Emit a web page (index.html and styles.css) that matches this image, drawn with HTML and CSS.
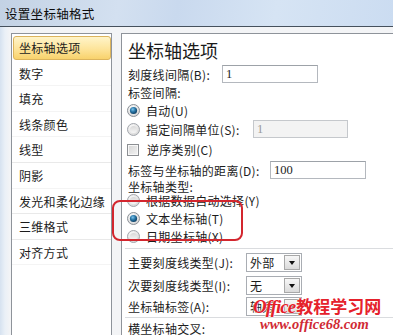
FILE: index.html
```html
<!DOCTYPE html>
<html lang="zh-CN">
<head>
    <meta charset="UTF-8">
    <title>设置坐标轴格式</title>
    <link rel="stylesheet" href="styles.css">
</head>
<body>
    <svg class="defs" width="0" height="0">
        <defs>
            <radialGradient id="ring" cx="40%" cy="35%" r="70%">
                <stop offset="0" stop-color="#ffffff"/>
                <stop offset="1" stop-color="#d4d4d4"/>
            </radialGradient>
            <radialGradient id="dot" cx="40%" cy="35%" r="65%">
                <stop offset="0" stop-color="#7fc4ec"/>
                <stop offset="0.5" stop-color="#2a78a8"/>
                <stop offset="1" stop-color="#0e3f64"/>
            </radialGradient>
            <linearGradient id="hole" x1="0" y1="0" x2="0" y2="1">
                <stop offset="0" stop-color="#d8d8d8"/>
                <stop offset="1" stop-color="#f6f6f6"/>
            </linearGradient>
        </defs>
    </svg>

    <div class="window">
        <div class="titlebar">设置坐标轴格式</div>
        <div class="body">
            <ul class="nav">
                <li class="on">坐标轴选项</li>
                <li>数字</li>
                <li>填充</li>
                <li>线条颜色</li>
                <li class="sep">线型</li>
                <li>阴影</li>
                <li class="sep">发光和柔化边缘</li>
                <li class="sep">三维格式</li>
                <li>对齐方式</li>
            </ul>

            <div class="pane">
                <h1>坐标轴选项</h1>

                <div class="row r1">
                    <span class="lbl w94">刻度线间隔(B):</span>
                    <div class="field w96">1</div>
                </div>
                <div class="row r2">标签间隔:</div>
                <div class="row r3">
                    <svg class="radio" viewBox="0 0 13 13"><circle cx="6.5" cy="6.5" r="6" fill="url(#ring)" stroke="#8b9097"/><circle cx="6.5" cy="6.5" r="3.6" fill="url(#dot)"/></svg>
                    <span>自动(U)</span>
                </div>
                <div class="row r4">
                    <svg class="radio" viewBox="0 0 13 13"><circle cx="6.5" cy="6.5" r="6" fill="url(#ring)" stroke="#a3a7ad"/><circle cx="6.5" cy="6.5" r="3.6" fill="url(#hole)"/></svg>
                    <span class="lbl w107">指定间隔单位(S):</span>
                    <div class="field off w95">1</div>
                </div>
                <div class="row r5">
                    <span class="check"></span>
                    <span>逆序类别(C)</span>
                </div>
                <div class="row r6">
                    <span class="lbl w142">标签与坐标轴的距离(D):</span>
                    <div class="field w96">100</div>
                </div>
                <div class="row r7">坐标轴类型:</div>
                <div class="row r8">
                    <svg class="radio" viewBox="0 0 13 13"><circle cx="6.5" cy="6.5" r="6" fill="url(#ring)" stroke="#a3a7ad"/><circle cx="6.5" cy="6.5" r="3.6" fill="url(#hole)"/></svg>
                    <span>根据数据自动选择(Y)</span>
                </div>
                <div class="row r9">
                    <svg class="radio" viewBox="0 0 13 13"><circle cx="6.5" cy="6.5" r="6" fill="url(#ring)" stroke="#8b9097"/><circle cx="6.5" cy="6.5" r="3.6" fill="url(#dot)"/></svg>
                    <span>文本坐标轴(T)</span>
                </div>
                <div class="row r10">
                    <svg class="radio" viewBox="0 0 13 13"><circle cx="6.5" cy="6.5" r="6" fill="url(#ring)" stroke="#a3a7ad"/><circle cx="6.5" cy="6.5" r="3.6" fill="url(#hole)"/></svg>
                    <span>日期坐标轴(X)</span>
                </div>

                <div class="rule first"></div>

                <div class="row r12">
                    <span class="lbl w118">主要刻度线类型(J):</span>
                    <div class="combo"><span>外部</span><i class="drop"></i></div>
                </div>
                <div class="row r13">
                    <span class="lbl w118">次要刻度线类型(I):</span>
                    <div class="combo"><span>无</span><i class="drop"></i></div>
                </div>
                <div class="row r14">
                    <span class="lbl w118">坐标轴标签(A):</span>
                    <div class="combo"><span>轴旁</span><i class="drop"></i></div>
                </div>

                <div class="rule second"></div>

                <div class="row r15">横坐标轴交叉:</div>
            </div>
        </div>

        <div class="annot"></div>

        <div class="mark">
            <div class="mark-top"><span class="latin">Office</span>教程学习网</div>
            <div class="mark-url">www.office68.com</div>
        </div>
    </div>
</body>
</html>
```

FILE: styles.css
```css
html, body{
    margin: 0;
    width: 393px;
    height: 335px;
    overflow: hidden;
}

body{
    font-family: "Noto Sans CJK SC", sans-serif;
    font-size: 12px;
    color: #1c1c1c;
    background: #f3f4f6;
}

.defs{
    position: absolute;
}

.window{
    position: relative;
    height: 335px;
}

.titlebar{
    height: 26px;
    line-height: 27px;
    padding-left: 5px;
    font-size: 12.5px;
    letter-spacing: 0.3px;
    color: #0c0c0c;
    background: linear-gradient(100deg, #c3d2e4 0%, #d3e0f0 30%, #c9d9ee 45%, #d6e4f4 70%, #cbdcf1 100%);
    border-bottom: 1px solid #46515d;
}

.body{
    display: flex;
    gap: 9px;
    padding: 6px 0 0 11px;
    height: 302px;
    background: linear-gradient(to right, #d6e2f0 0, #eaf0f7 5px, #f3f4f6 10px);
}

/* left list */
.nav{
    list-style: none;
    margin: 0;
    padding: 1px 0 0;
    width: 99px;
    height: 310px;
    background: #fff;
    border: 1px solid #8e939a;
}

.nav li{
    height: 25.6px;
    line-height: 25.6px;
    padding-left: 7px;
    letter-spacing: 0.3px;
    box-sizing: border-box;
    border-bottom: 1px solid #f4f4f4;
}

.nav li.sep{
    border-bottom-color: #e9e9e9;
}

.nav li.on{
    margin: 1px 0 1px 1px;
    height: 23.6px;
    line-height: 21.6px;
    padding-left: 5px;
    border: 1px solid #dcb45c;
    border-radius: 3px;
    background: linear-gradient(#fff4c9, #fde49a 55%, #f8d26c);
}

/* right pane */
.pane{
    flex: 1;
    height: 310px;
    padding-left: 6px;
    background: #fff;
    border: 1px solid #8e939a;
    border-right: none;
}

.pane h1{
    margin: 0;
    height: 30px;
    line-height: 32px;
    font-size: 18px;
    font-weight: normal;
    color: #1a1a1a;
}

.row{
    display: flex;
    align-items: center;
    line-height: 13px;
    letter-spacing: 0.3px;
    white-space: nowrap;
}

.r1{ height: 20px; }
.r2{ height: 17px; }
.r3{ height: 18px; }
.r4{ height: 20px; }
.r5{ height: 21px; }
.r6{ height: 20px; }
.r7{ height: 13px; }
.r8{ height: 15px; }
.r9{ height: 20px; }
.r10{ height: 17px; }
.r12{ height: 21px; }
.r13{ height: 24px; }
.r14{ height: 19px; }
.r15{ height: 16px; }

.lbl{ flex: none; }
.w94{ width: 94px; }
.w107{ width: 107px; }
.w118{ width: 118px; }
.w142{ width: 142px; }

.radio{
    width: 13px;
    height: 13px;
    margin: 0 6px 0 -1px;
    flex: none;
}

.check{
    width: 10px;
    height: 10px;
    margin: 0 8px 0 -1px;
    border: 1px solid #8c8f93;
    background: linear-gradient(135deg, #d5d5d5, #f4f4f4);
    box-shadow: inset 0 0 0 1px #f8f8f8;
}

.field{
    height: 18px;
    box-sizing: border-box;
    padding-left: 3px;
    line-height: 16px;
    font-family: "Liberation Serif", serif;
    font-size: 12.5px;
    letter-spacing: 0;
    background: #fff;
    border: 1px solid #b4b8be;
    border-top-color: #9da2a8;
}

.field.off{
    color: #9a9a9a;
    background: #f3f3f3;
    border-color: #c5c8cc;
}

.w95{ width: 95px; }
.w96{ width: 96px; }

.combo{
    display: flex;
    align-items: center;
    width: 56px;
    height: 19px;
    box-sizing: border-box;
    padding-left: 3px;
    background: #fff;
    border: 1px solid #a9adb3;
}

.drop{
    position: relative;
    margin-left: auto;
    margin-right: 1px;
    width: 16px;
    height: 15px;
    box-sizing: border-box;
    border: 1px solid #a8a8a8;
    background: linear-gradient(#f7f7f7, #dadada);
}

.drop::after{
    content: "";
    position: absolute;
    left: 4px;
    top: 5px;
    border-left: 3.5px solid transparent;
    border-right: 3.5px solid transparent;
    border-top: 4px solid #111;
}

.rule{
    margin-left: -3px;
    border-bottom: 1px solid #dadcdf;
}

.rule.first{
    height: 3px;
    margin-bottom: 3px;
}

.rule.second{
    height: 1px;
    margin-bottom: 2px;
}

/* red marker drawn over the dialog */
.annot{
    position: absolute;
    left: 112px;
    top: 200px;
    width: 127px;
    height: 37px;
    border: 2px solid #d3262e;
    border-radius: 8px;
}

/* site watermark */
.mark{
    position: absolute;
    left: 253px;
    top: 295px;
    color: #e5212b;
    text-shadow: 0 0 2px #fff, 0 0 1px #fff;
}

.mark-top{
    height: 21px;
    line-height: 21px;
    font-size: 17px;
    font-weight: bold;
    white-space: nowrap;
}

.mark-top .latin{
    font-family: "Liberation Serif", serif;
    font-style: italic;
    font-size: 19px;
    letter-spacing: -1px;
    margin-right: 1px;
}

.mark-url{
    margin-left: 7px;
    line-height: 16px;
    font-family: "Liberation Serif", serif;
    font-style: italic;
    font-weight: bold;
    font-size: 14.5px;
    color: #d02a34;
    white-space: nowrap;
}
```
